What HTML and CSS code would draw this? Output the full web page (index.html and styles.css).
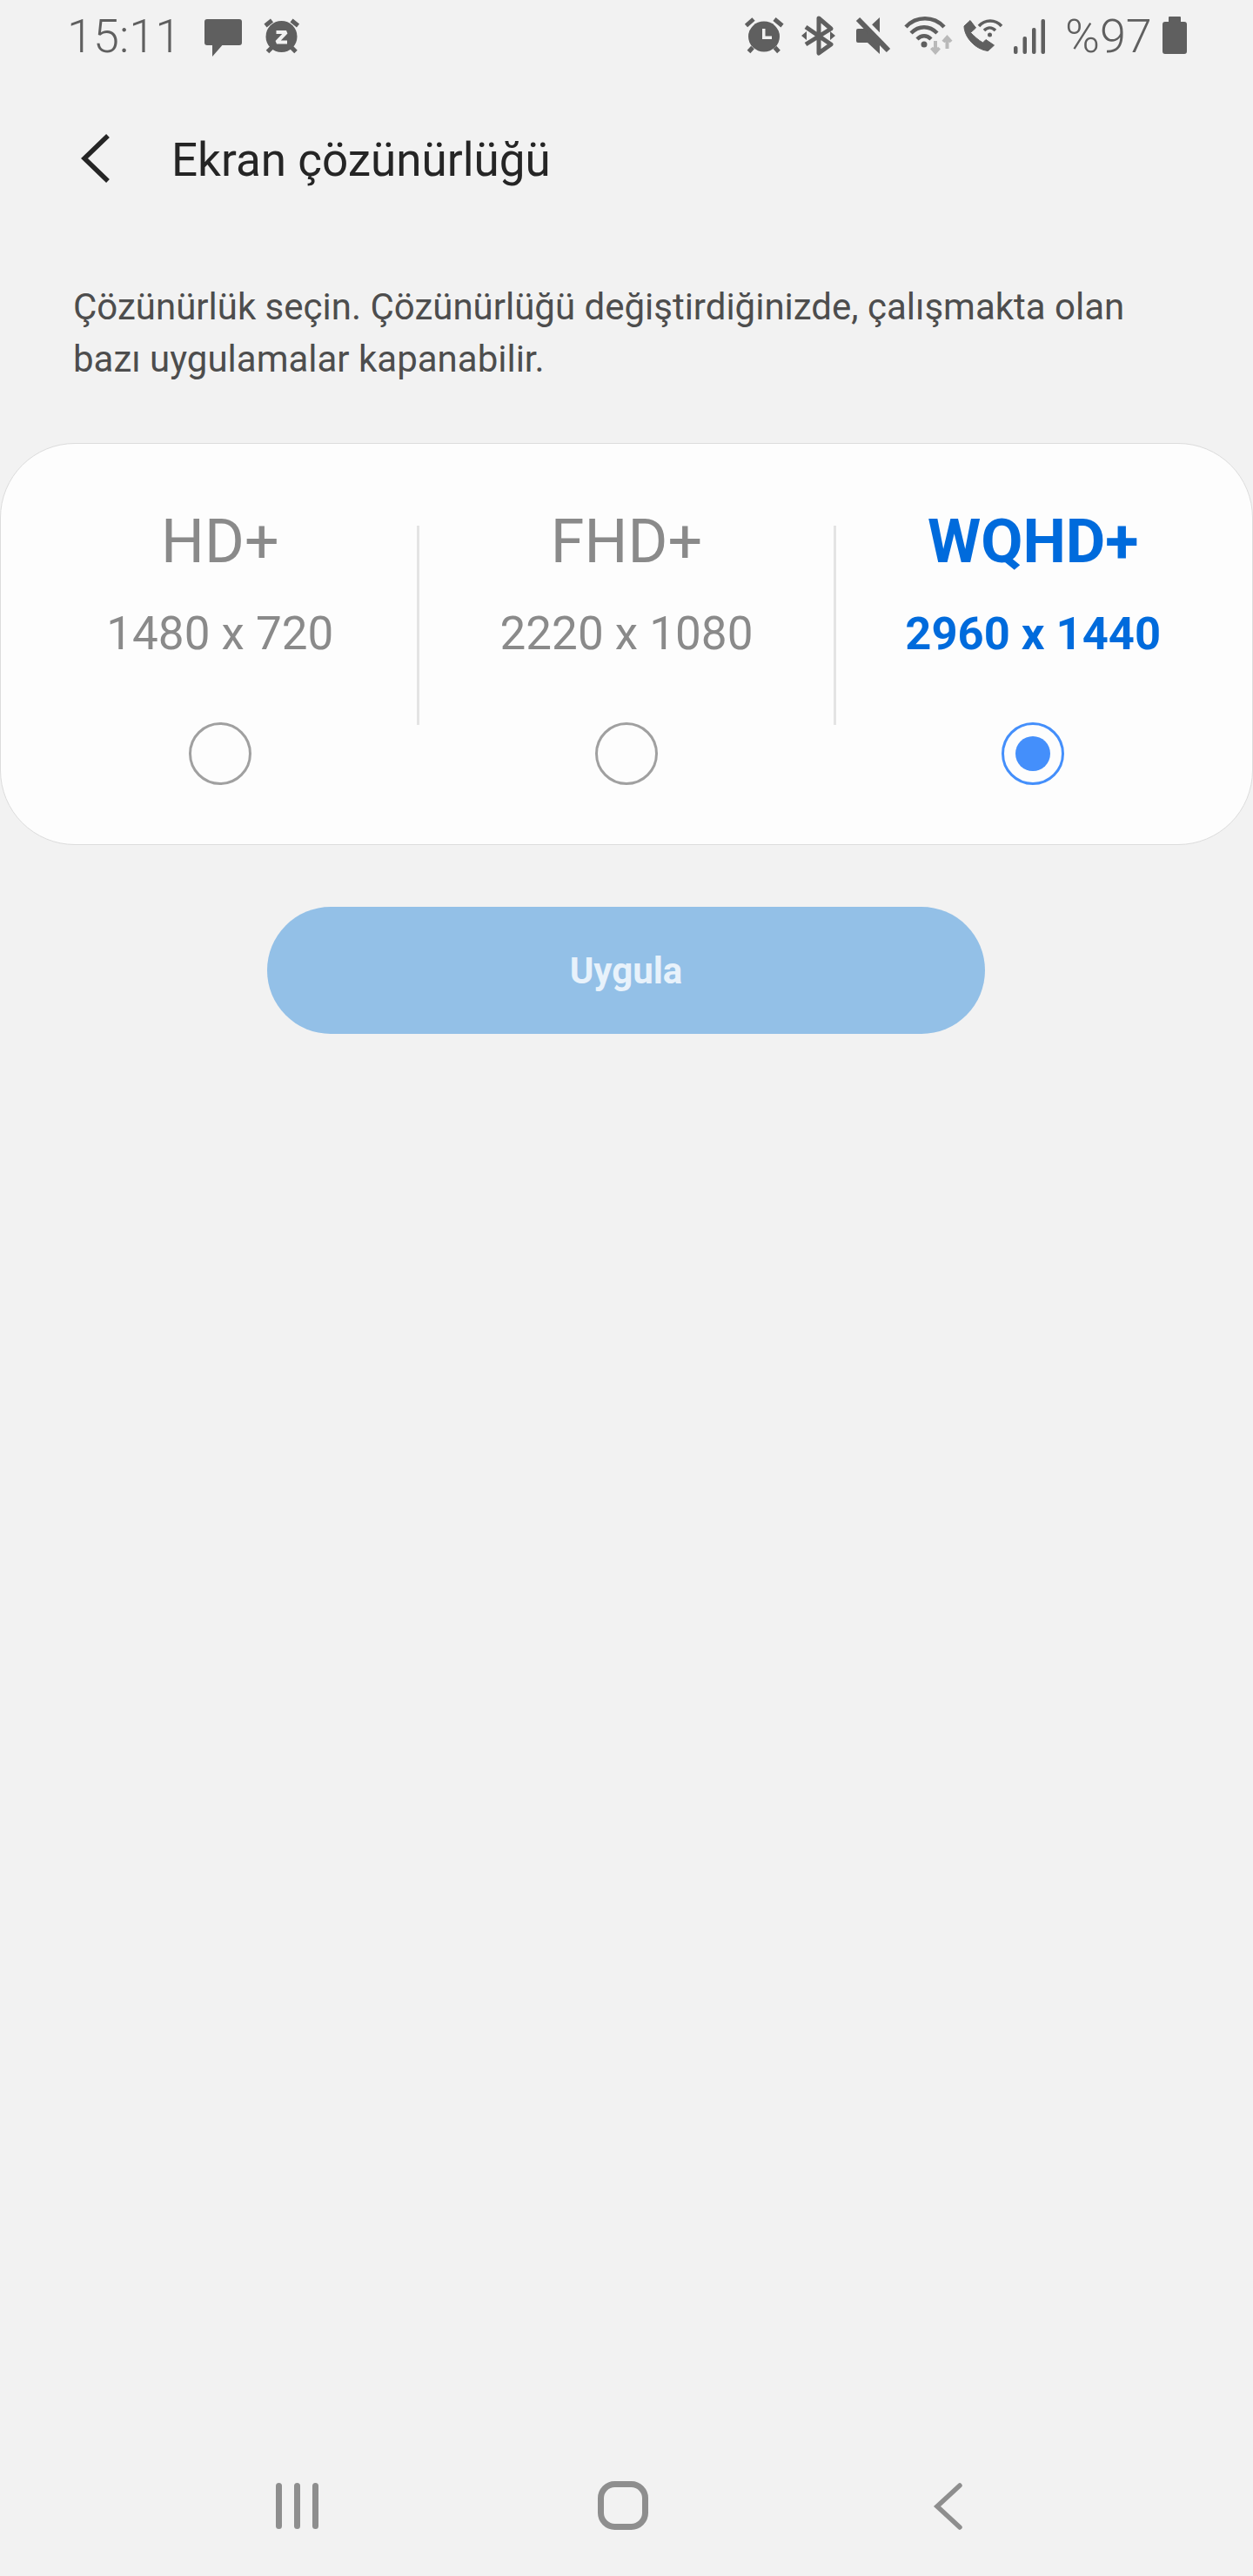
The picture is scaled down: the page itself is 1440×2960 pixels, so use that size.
FILE: index.html
```html
<!DOCTYPE html>
<html lang="tr">
<head>
    <meta charset="UTF-8">
    <meta name="viewport" content="width=device-width, initial-scale=1.0">
    <title>Ekran çözünürlüğü</title>
    <link rel="stylesheet" href="styles.css">
</head>
<body>
    <div class="status-bar">
        <div class="status-left">
            <span class="clock">15:11</span>
            <svg class="icon" width="64" height="52" viewBox="230 15 64 52">
                <rect x="235" y="22" width="43" height="30" rx="3"/>
                <path d="M244 50v15l13-15z"/>
            </svg>
            <svg class="icon" width="60" height="52" viewBox="294 15 60 52">
                <circle cx="323.5" cy="42" r="18"/>
                <path class="thick" d="M305 29.500l7.500-6M335 23.500l7.500 6M307.500 59.500l5-5M335 54.500l5 5"/>
                <path class="cut" d="M317.500 37h11.500l-11 11.500h12"/>
            </svg>
        </div>
        <div class="status-right">
            <svg class="icon" width="61" height="52" viewBox="850 15 61 52">
                <ellipse cx="878" cy="42" rx="18" ry="17.500"/>
                <path class="thick" d="M857.500 29.500l8.500-7.500M890 22l9 7.500M860.500 59.500l4.500-5M890.500 54.500l4.500 5"/>
                <path class="hand" d="M876 33h3.500v8.500h7.500v3.500h-11z"/>
            </svg>
            <svg class="icon" width="60" height="52" viewBox="911 15 60 52">
                <path class="line" d="M926 31l29 20-14 10V21l14 12-29 18"/>
                <path d="M921 41l6-5v10zM960 41l-6-5v10z"/>
            </svg>
            <svg class="icon" width="60" height="52" viewBox="971 15 60 52">
                <path d="M984 35a2 2 0 0 1 2-2h11l14-13v42l-14-13h-11a2 2 0 0 1-2-2z"/>
                <path class="gap" d="M989 19l35 36"/>
                <path class="slash" d="M986 22l35 36"/>
            </svg>
            <svg class="icon" width="70" height="52" viewBox="1031 15 70 52">
                <path class="arc" d="M1041 31c12-13 32-13 44 0M1047 38c9-9 21-9 30 0M1054 45c5-5 11-5 16 0"/>
                <circle cx="1062" cy="51" r="3.500"/>
                <path class="arrow" d="M1075 47v13M1070.500 55l4.500 5 4.500-5M1088.500 56V43M1084 48l4.500-5 4.500 5"/>
            </svg>
            <svg class="icon" width="57" height="52" viewBox="1101 15 57 52">
                <path class="handset" d="M1115 23.500l-7 6.500c0 12 12.500 27 27.500 28.500l7-6.500-9.500-6.500-3.500 3.500c-5.500-3-10.500-8-14-11.500l6-5.500z"/>
                <path class="arc-small" d="M1125 30c7-8 19-8 26 0M1131 35c4-4 9-4 13 0"/>
                <circle cx="1137.500" cy="40" r="2.500"/>
            </svg>
            <svg class="icon" width="52" height="52" viewBox="1158 15 52 52">
                <rect x="1165" y="53" width="4.500" height="9" rx="2"/>
                <rect x="1175.500" y="42" width="4.500" height="20" rx="2"/>
                <rect x="1186" y="32" width="4.500" height="30" rx="2"/>
                <rect x="1196.500" y="22" width="4.500" height="40" rx="2"/>
            </svg>
            <span class="battery-text">%97</span>
            <svg class="icon" width="28" height="52" viewBox="1336 15 28 52">
                <rect x="1336" y="25" width="28" height="37" rx="3"/>
                <rect x="1343" y="19" width="14" height="8" rx="1"/>
            </svg>
        </div>
    </div>

    <div class="app-bar">
        <svg class="back" width="44" height="64" viewBox="90 152 44 64">
            <path d="M124 156l-27 26 27 26"/>
        </svg>
        <div class="title">Ekran çözünürlüğü</div>
    </div>

    <p class="description">Çözünürlük seçin. Çözünürlüğü değiştirdiğinizde, çalışmakta olan<br>bazı uygulamalar kapanabilir.</p>

    <div class="card">
        <div class="res-col first">
            <div class="res-name">HD+</div>
            <div class="res-size">1480 x 720</div>
            <div class="radio"></div>
        </div>
        <div class="divider"></div>
        <div class="res-col middle">
            <div class="res-name">FHD+</div>
            <div class="res-size">2220 x 1080</div>
            <div class="radio"></div>
        </div>
        <div class="divider"></div>
        <div class="res-col last selected">
            <div class="res-name">WQHD+</div>
            <div class="res-size">2960 x 1440</div>
            <div class="radio"><div class="radio-dot"></div></div>
        </div>
    </div>

    <button class="apply-btn">Uygula</button>

    <div class="nav-bar">
        <svg class="nav-icon" width="49" height="60" viewBox="317 2850 49 60">
            <rect x="317" y="2853" width="7" height="53" rx="3.500"/>
            <rect x="338" y="2853" width="7" height="53" rx="3.500"/>
            <rect x="359" y="2853" width="7" height="53" rx="3.500"/>
        </svg>
        <svg class="nav-icon" width="58" height="60" viewBox="687 2850 58 60">
            <rect class="home" x="690.500" y="2854.500" width="51" height="49" rx="16"/>
        </svg>
        <svg class="nav-icon" width="40" height="60" viewBox="1066 2850 40 60">
            <path class="nav-back" d="M1103 2856l-26 24 26 24"/>
        </svg>
    </div>
</body>
</html>
```

FILE: styles.css
```css
body {
    margin: 0;
    height: 2960px;
    display: flex;
    flex-direction: column;
    font-family: Roboto, "Liberation Sans", sans-serif;
    background-color: #f2f2f2;
    color: #252525;
    overflow: hidden;
}

.status-bar {
    height: 82px;
    padding: 0 76px 0 77px;
    display: flex;
    justify-content: space-between;
    align-items: center;
    color: #5f5f5f;
}

.status-left,
.status-right {
    display: flex;
    align-items: center;
}

.clock {
    width: 153px;
    font-size: 54px;
    font-weight: 350;
}

.battery-text {
    width: 126px;
    padding-left: 14px;
    box-sizing: border-box;
    font-size: 54px;
    font-weight: 350;
}

.icon {
    display: block;
    fill: #5f5f5f;
}

.icon .thick {
    fill: none;
    stroke: #5f5f5f;
    stroke-width: 5;
}

.icon .line {
    fill: none;
    stroke: #5f5f5f;
    stroke-width: 5;
    stroke-linejoin: round;
}

.icon .slash {
    fill: none;
    stroke: #5f5f5f;
    stroke-width: 6;
}

.icon .gap {
    fill: none;
    stroke: #f2f2f2;
    stroke-width: 6;
}

.icon .cut {
    fill: none;
    stroke: #f2f2f2;
    stroke-width: 4;
    stroke-linejoin: bevel;
}

.icon .hand {
    fill: #f2f2f2;
}

.icon .handset {
    stroke: #5f5f5f;
    stroke-width: 1;
    stroke-linejoin: round;
}

.icon .arc {
    fill: none;
    stroke: #5f5f5f;
    stroke-width: 4.500;
}

.icon .arc-small {
    fill: none;
    stroke: #5f5f5f;
    stroke-width: 3.500;
}

.icon .arrow {
    fill: none;
    stroke: #b9b9b9;
    stroke-width: 4;
}

.app-bar {
    height: 204px;
    padding-left: 90px;
    display: flex;
    align-items: center;
}

.back {
    display: block;
    fill: none;
    stroke: #252525;
    stroke-width: 5.500;
}

.title {
    margin-left: 63px;
    font-size: 53px;
}

.description {
    margin: 37px 0 0 84px;
    font-size: 42px;
    line-height: 60px;
    color: #4d4d4d;
}

.card {
    margin-top: 66px;
    height: 462px;
    box-sizing: border-box;
    display: flex;
    background-color: #fdfdfd;
    border: 1px solid #dcdcdc;
    border-radius: 86px;
}

.res-col {
    box-sizing: border-box;
    display: flex;
    flex-direction: column;
    align-items: center;
    color: #8a8a8a;
}

.res-col.first {
    width: 478px;
    padding-left: 26px;
}

.res-col.middle {
    width: 477px;
}

.res-col.last {
    width: 478px;
    padding-right: 26px;
}

.res-col.selected {
    color: #006bdc;
    font-weight: 700;
}

.divider {
    flex-shrink: 0;
    width: 3px;
    height: 229px;
    margin-top: 94px;
    background-color: #e4e4e4;
}

.res-name {
    margin-top: 64px;
    font-size: 70px;
    line-height: 96px;
}

.res-size {
    margin-top: 26px;
    font-size: 53px;
    line-height: 64px;
}

.selected .res-size {
    font-size: 52.500px;
}

.radio {
    width: 72px;
    height: 72px;
    margin-top: 70px;
    box-sizing: border-box;
    display: flex;
    justify-content: center;
    align-items: center;
    border: 3px solid #a0a0a0;
    border-radius: 50%;
}

.selected .radio {
    border-color: #448ffb;
}

.radio-dot {
    width: 40px;
    height: 40px;
    border-radius: 50%;
    background-color: #448ffb;
}

.apply-btn {
    width: 825px;
    height: 146px;
    margin: 71px 0 0 307px;
    padding: 0;
    border: none;
    border-radius: 73px;
    background-color: #93c0e7;
    color: #e8f2fb;
    font-family: inherit;
    font-size: 42px;
    font-weight: 700;
}

.nav-bar {
    margin-top: auto;
    height: 110px;
    padding-left: 317px;
    display: flex;
    gap: 321px;
}

.nav-icon {
    display: block;
    fill: #8e8e8e;
}

.nav-icon .home {
    fill: none;
    stroke: #8e8e8e;
    stroke-width: 7;
}

.nav-icon .nav-back {
    fill: none;
    stroke: #8e8e8e;
    stroke-width: 5.500;
    stroke-linecap: round;
}
```
